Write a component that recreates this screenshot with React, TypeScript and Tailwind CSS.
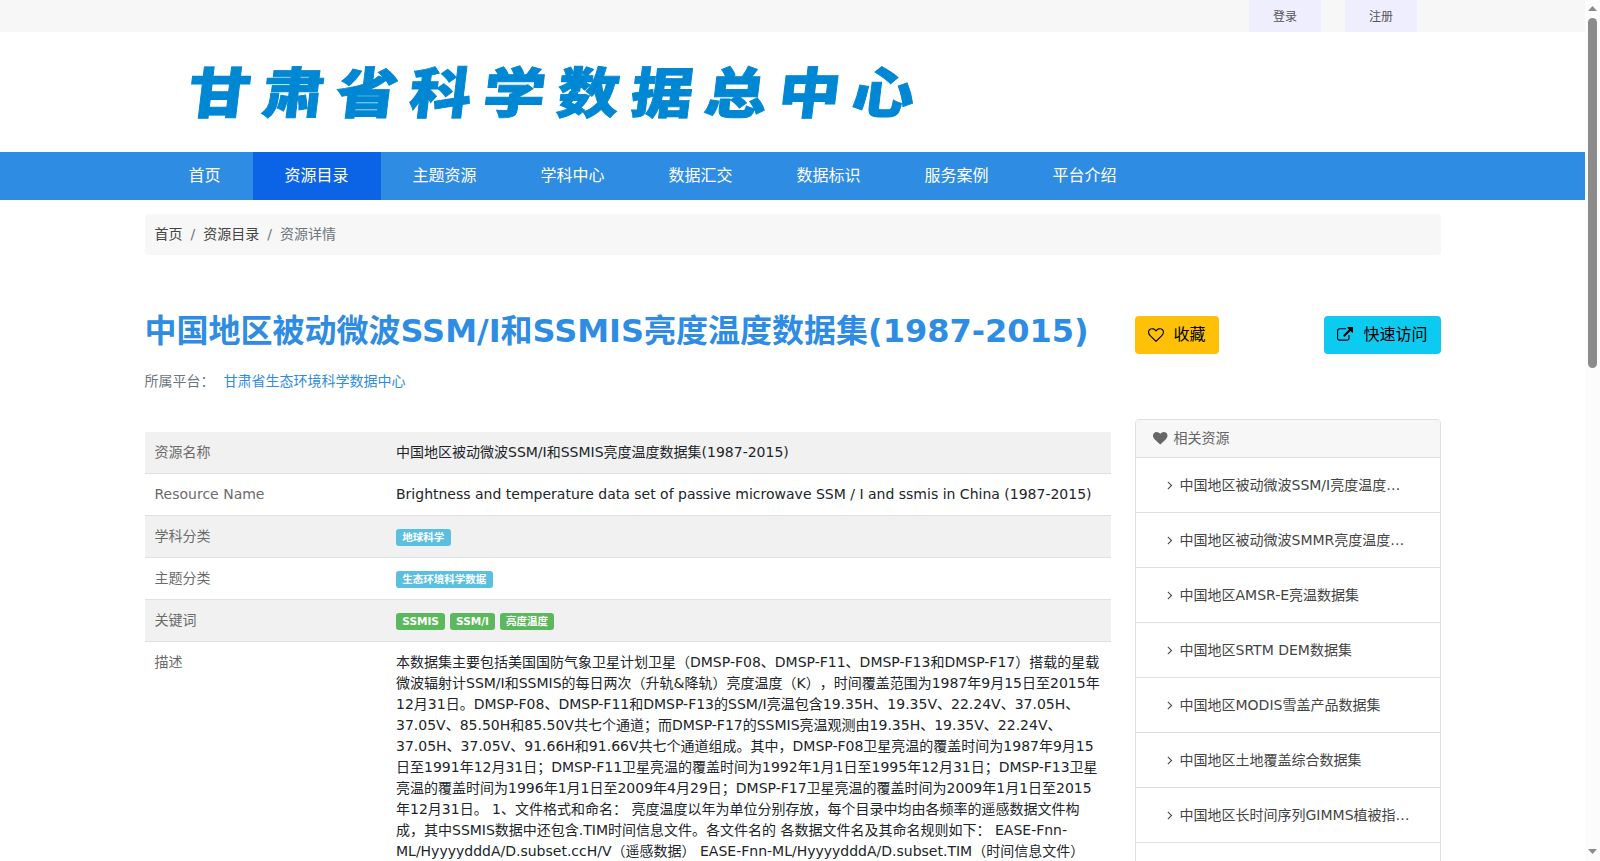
import clsx from "clsx";

const navItems = [
  "首页",
  "资源目录",
  "主题资源",
  "学科中心",
  "数据汇交",
  "数据标识",
  "服务案例",
  "平台介绍",
];

const related = [
  "中国地区被动微波SSM/I亮度温度…",
  "中国地区被动微波SMMR亮度温度…",
  "中国地区AMSR-E亮温数据集",
  "中国地区SRTM DEM数据集",
  "中国地区MODIS雪盖产品数据集",
  "中国地区土地覆盖综合数据集",
  "中国地区长时间序列GIMMS植被指…",
];

const description =
  "本数据集主要包括美国国防气象卫星计划卫星（DMSP-F08、DMSP-F11、DMSP-F13和DMSP-F17）搭载的星载微波辐射计SSM/I和SSMIS的每日两次（升轨&降轨）亮度温度（K），时间覆盖范围为1987年9月15日至2015年12月31日。DMSP-F08、DMSP-F11和DMSP-F13的SSM/I亮温包含19.35H、19.35V、22.24V、37.05H、37.05V、85.50H和85.50V共七个通道；而DMSP-F17的SSMIS亮温观测由19.35H、19.35V、22.24V、37.05H、37.05V、91.66H和91.66V共七个通道组成。其中，DMSP-F08卫星亮温的覆盖时间为1987年9月15日至1991年12月31日；DMSP-F11卫星亮温的覆盖时间为1992年1月1日至1995年12月31日；DMSP-F13卫星亮温的覆盖时间为1996年1月1日至2009年4月29日；DMSP-F17卫星亮温的覆盖时间为2009年1月1日至2015年12月31日。 1、文件格式和命名： 亮度温度以年为单位分别存放，每个目录中均由各频率的遥感数据文件构成，其中SSMIS数据中还包含.TIM时间信息文件。各文件名的 各数据文件名及其命名规则如下： EASE-Fnn-ML/HyyyydddA/D.subset.ccH/V（遥感数据） EASE-Fnn-ML/HyyyydddA/D.subset.TIM（时间信息文件）";

const icons = {
  heart:
    "M896 1664q-26 0-44-18l-624-602q-10-8-27.5-26t-55.5-65.5-68-97.5-53.5-121-23.5-138q0-220 127-344t351-124q62 0 126.5 21.5t120 58 95.5 68.5 76 68q36-36 76-68t95.5-68.5 120-58 126.5-21.5q224 0 351 124t127 344q0 221-229 450l-623 600q-18 18-44 18z",
  heartOutline:
    "M1664 596q0-81-21.5-143t-55-98.5-81.5-59.5-94-31-98-8-112 25.5-110.5 64-86.5 72-60 61.5q-18 22-49 22t-49-22q-24-28-60-61.5t-86.5-72-110.5-64-112-25.5-98 8-94 31-81.5 59.5-55 98.5-21.5 143q0 168 187 355l581 560 580-559q188-188 188-356zm128 0q0 221-229 450l-623 600q-18 18-44 18t-44-18l-624-602q-10-8-27.5-26t-55.5-65.5-68-97.5-53.5-121-23.5-138q0-220 127-344t351-124q62 0 126.5 21.5t120 58 95.5 68.5 76 68q36-36 76-68t95.5-68.5 120-58 126.5-21.5q224 0 351 124t127 344z",
  external:
    "M1408 928v320q0 119-84.5 203.5t-203.5 84.5h-832q-119 0-203.5-84.5t-84.5-203.5v-832q0-119 84.5-203.5t203.5-84.5h704q14 0 23 9t9 23v64q0 14-9 23t-23 9h-704q-66 0-113 47t-47 113v832q0 66 47 113t113 47h832q66 0 113-47t47-113v-320q0-14 9-23t23-9h64q14 0 23 9t9 23zm384-864v512q0 26-19 45t-45 19-45-19l-176-176-652 652q-10 10-23 10t-23-10l-114-114q-10-10-10-23t10-23l652-652-176-176q-19-19-19-45t19-45 45-19h512q26 0 45 19t19 45z",
  angle:
    "M1171 960q0 13-10 23l-466 466q-10 10-23 10t-23-10l-50-50q-10-10-10-23t10-23l393-393-393-393q-10-10-10-23t10-23l50-50q10-10 23-10t23 10l466 466q10 10 10 23z",
};

function Icon({ name, className }: { name: keyof typeof icons; className?: string }) {
  return (
    <svg viewBox="0 0 1792 1792" fill="currentColor" className={clsx("shrink-0", className)}>
      <path d={icons[name]} />
    </svg>
  );
}

function Badge({ text, color }: { text: string; color: string }) {
  return (
    <span
      className={clsx(
        "mt-[3px] flex h-[17px] items-center rounded-[3px] px-[6.3px] text-[10.5px] leading-none font-bold text-white",
        color
      )}
    >
      {text}
    </span>
  );
}

function Row({ label, striped, children }: { label: string; striped?: boolean; children: React.ReactNode }) {
  return (
    <div className={clsx("flex border-b border-[#dee2e6]", striped && "bg-[#f1f1f1]")}>
      <div className="w-1/4 p-2.5 text-[#6b6b6b]">{label}</div>
      <div className="w-3/4 p-2.5 text-[#212529]">{children}</div>
    </div>
  );
}

function Scrollbar() {
  return (
    <div className="flex w-[15px] shrink-0 flex-col items-center bg-[#fcfcfc]">
      <svg viewBox="0 0 15 18" className="h-[18px] w-[15px] shrink-0">
        <path d="M3 11l4.5-5 4.5 5z" fill="#8b8b8b" />
      </svg>
      <div className="h-[350px] w-[9px] rounded-full bg-[#8b8b8b]" />
      <svg viewBox="0 0 15 18" className="mt-auto h-[18px] w-[15px] shrink-0">
        <path d="M3 6l4.5 5 4.5-5z" fill="#8b8b8b" />
      </svg>
    </div>
  );
}

export default function App() {
  return (
    <div className="flex h-screen overflow-hidden bg-white font-['DejaVu_Sans','Noto_Sans_CJK_SC',sans-serif] text-sm leading-[21px] [text-spacing-trim:space-all]">
      <div className="h-full flex-1 overflow-hidden">
        <div className="h-8 bg-[#f7f7f7]">
          <div className="mx-auto flex w-[1296px] justify-end gap-6 pr-[23.5px] text-xs leading-[30px] text-[#555]">
            <a className="bg-[#efeefe] px-6 pt-0.5">登录</a>
            <a className="bg-[#efeefe] px-6 pt-0.5">注册</a>
          </div>
        </div>

        <header className="mx-auto flex h-[120px] w-[1296px] items-center pb-1.5 pl-[44px]">
          <h1 className="-skew-x-6 scale-y-[0.88] font-['Noto_Sans_CJK_SC',sans-serif] text-[62px] leading-none font-black tracking-[11.8px] whitespace-nowrap text-[#0087d3] [-webkit-text-stroke:1px_#0087d3]">
            甘肃省科学数据总中心
          </h1>
        </header>

        <nav className="h-12 bg-[#2e8ce3]">
          <div className="mx-auto flex w-[1296px] pl-3 text-base leading-12 text-white">
            {navItems.map((item) => (
              <a key={item} className={clsx("px-8", item === "资源目录" && "bg-[#0b63e6]")}>
                {item}
              </a>
            ))}
          </div>
        </nav>

        <div className="mx-auto w-[1296px]">
          <div className="mt-3.5 flex gap-2 rounded bg-[#f7f7f7] p-2.5 text-[#6c757d]">
            <a className="text-[#444]">首页</a>
            <span>/</span>
            <a className="text-[#444]">资源目录</a>
            <span>/</span>
            <span>资源详情</span>
          </div>

          <div className="mt-[57px] flex gap-6">
            <div className="w-[966px]">
              <h2 className="text-[32px] leading-[38px] font-bold whitespace-nowrap text-[#2e8ce3]">
                中国地区被动微波SSM/I和SSMIS亮度温度数据集(1987-2015)
              </h2>
              <div className="mt-[21px] flex gap-[9px] text-[#6c757d]">
                <span>所属平台：</span>
                <a className="text-[#2e8ce3]">甘肃省生态环境科学数据中心</a>
              </div>

              <div className="mt-10">
                <Row label="资源名称" striped>
                  中国地区被动微波SSM/I和SSMIS亮度温度数据集(1987-2015)
                </Row>
                <Row label="Resource Name">
                  Brightness and temperature data set of passive microwave SSM / I and ssmis in China (1987-2015)
                </Row>
                <Row label="学科分类" striped>
                  <div className="flex">
                    <Badge text="地球科学" color="bg-[#5bc0de]" />
                  </div>
                </Row>
                <Row label="主题分类">
                  <div className="flex">
                    <Badge text="生态环境科学数据" color="bg-[#5bc0de]" />
                  </div>
                </Row>
                <Row label="关键词" striped>
                  <div className="flex gap-[4.6px]">
                    <Badge text="SSMIS" color="bg-[#5cb85c]" />
                    <Badge text="SSM/I" color="bg-[#5cb85c]" />
                    <Badge text="亮度温度" color="bg-[#5cb85c]" />
                  </div>
                </Row>
                <Row label="描述">{description}</Row>
              </div>
            </div>

            <aside className="w-[306px]">
              <div className="mt-1 flex justify-between text-base leading-[38px] text-black">
                <button className="flex h-[38px] items-center rounded bg-[#ffc107] px-[13px]">
                  <Icon name="heartOutline" className="mr-2.5 size-4" />
                  收藏
                </button>
                <button className="flex h-[38px] items-center rounded bg-[#0dcaf0] px-[13px]">
                  <Icon name="external" className="mr-2.5 size-4" />
                  快速访问
                </button>
              </div>

              <div className="mt-[65px] h-[520px] overflow-hidden rounded border border-[#dfdfdf]">
                <div className="flex items-center gap-1.5 border-b border-[#dfdfdf] bg-[#f7f7f7] py-2 pl-[17.5px] text-[#666]">
                  <Icon name="heart" className="size-[14.5px]" />
                  相关资源
                </div>
                {related.map((title) => (
                  <a
                    key={title}
                    className="flex h-[55px] items-center gap-[2.5px] border-b border-[#dfdfdf] pl-[27.5px] whitespace-nowrap text-[#444]"
                  >
                    <Icon name="angle" className="size-[14px]" />
                    {title}
                  </a>
                ))}
              </div>
            </aside>
          </div>
        </div>
      </div>
      <Scrollbar />
    </div>
  );
}
